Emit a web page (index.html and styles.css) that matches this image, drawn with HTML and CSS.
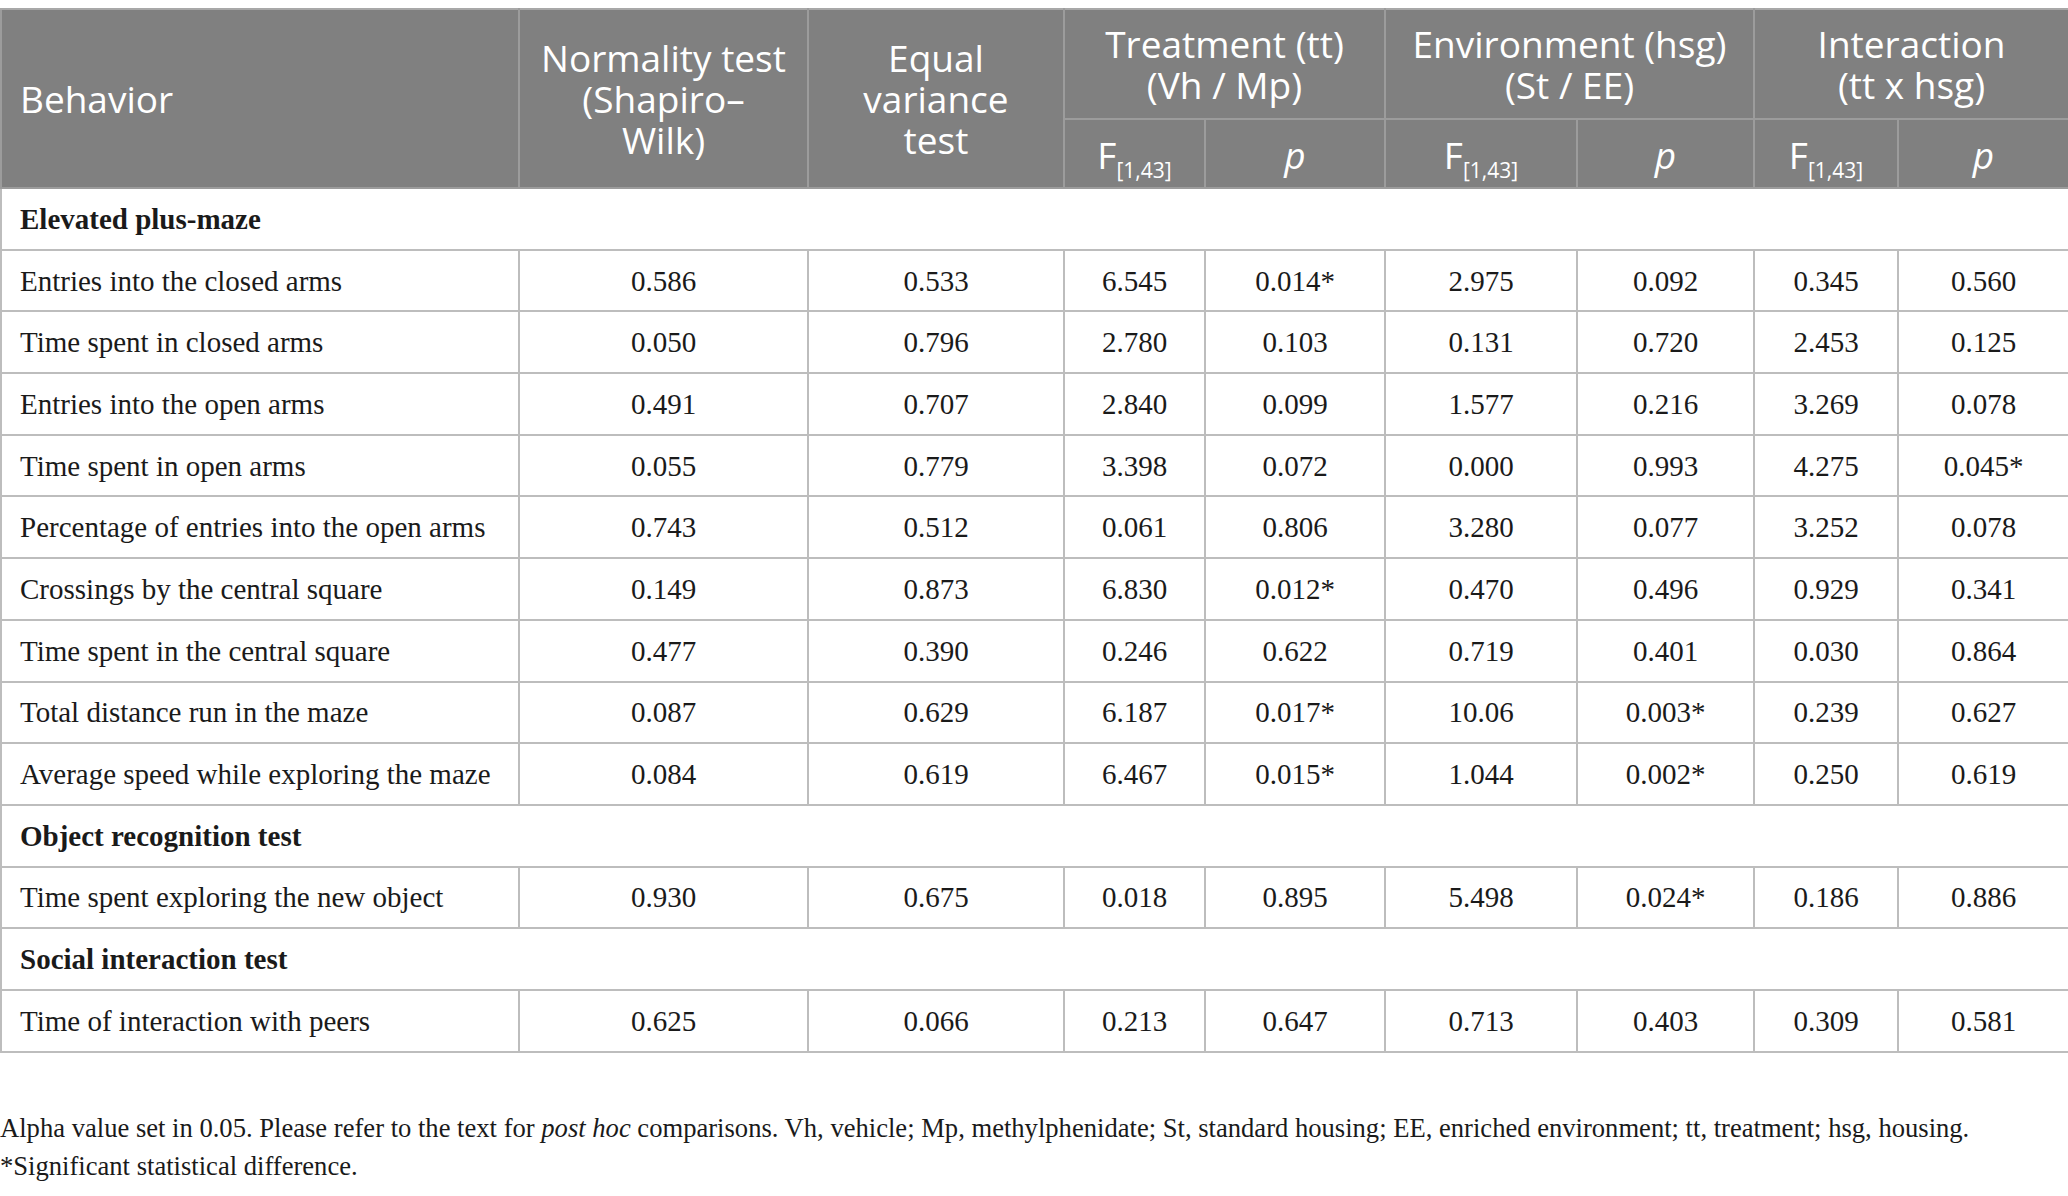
FILE: index.html
```html
<!DOCTYPE html>
<html lang="en">
<head>
<meta charset="utf-8">
<title>Table</title>
<link rel="stylesheet" href="styles.css">
</head>
<body>
<table class="stats">
  <colgroup>
    <col class="c-beh"><col class="c-norm"><col class="c-eq">
    <col class="c-f1"><col class="c-p1"><col class="c-f2"><col class="c-p2"><col class="c-f3"><col class="c-p3">
  </colgroup>
  <thead>
    <tr class="h1">
      <th rowspan="2" class="left">Behavior</th>
      <th rowspan="2">Normality test<br>(Shapiro–<br>Wilk)</th>
      <th rowspan="2">Equal<br>variance<br>test</th>
      <th colspan="2">Treatment (tt)<br>(Vh / Mp)</th>
      <th colspan="2">Environment (hsg)<br>(St / EE)</th>
      <th colspan="2">Interaction<br>(tt x hsg)</th>
    </tr>
    <tr class="h2">
      <th>F<sub>[1,43]</sub></th><th><i>p</i></th>
      <th>F<sub>[1,43]</sub></th><th><i>p</i></th>
      <th>F<sub>[1,43]</sub></th><th><i>p</i></th>
    </tr>
  </thead>
  <tbody>
    <tr class="sec"><td colspan="9">Elevated plus-maze</td></tr>
    <tr><td>Entries into the closed arms</td><td>0.586</td><td>0.533</td><td>6.545</td><td>0.014*</td><td>2.975</td><td>0.092</td><td>0.345</td><td>0.560</td></tr>
    <tr><td>Time spent in closed arms</td><td>0.050</td><td>0.796</td><td>2.780</td><td>0.103</td><td>0.131</td><td>0.720</td><td>2.453</td><td>0.125</td></tr>
    <tr><td>Entries into the open arms</td><td>0.491</td><td>0.707</td><td>2.840</td><td>0.099</td><td>1.577</td><td>0.216</td><td>3.269</td><td>0.078</td></tr>
    <tr><td>Time spent in open arms</td><td>0.055</td><td>0.779</td><td>3.398</td><td>0.072</td><td>0.000</td><td>0.993</td><td>4.275</td><td>0.045*</td></tr>
    <tr><td>Percentage of entries into the open arms</td><td>0.743</td><td>0.512</td><td>0.061</td><td>0.806</td><td>3.280</td><td>0.077</td><td>3.252</td><td>0.078</td></tr>
    <tr><td>Crossings by the central square</td><td>0.149</td><td>0.873</td><td>6.830</td><td>0.012*</td><td>0.470</td><td>0.496</td><td>0.929</td><td>0.341</td></tr>
    <tr><td>Time spent in the central square</td><td>0.477</td><td>0.390</td><td>0.246</td><td>0.622</td><td>0.719</td><td>0.401</td><td>0.030</td><td>0.864</td></tr>
    <tr><td>Total distance run in the maze</td><td>0.087</td><td>0.629</td><td>6.187</td><td>0.017*</td><td>10.06</td><td>0.003*</td><td>0.239</td><td>0.627</td></tr>
    <tr><td>Average speed while exploring the maze</td><td>0.084</td><td>0.619</td><td>6.467</td><td>0.015*</td><td>1.044</td><td>0.002*</td><td>0.250</td><td>0.619</td></tr>
    <tr class="sec"><td colspan="9">Object recognition test</td></tr>
    <tr><td>Time spent exploring the new object</td><td>0.930</td><td>0.675</td><td>0.018</td><td>0.895</td><td>5.498</td><td>0.024*</td><td>0.186</td><td>0.886</td></tr>
    <tr class="sec"><td colspan="9">Social interaction test</td></tr>
    <tr><td>Time of interaction with peers</td><td>0.625</td><td>0.066</td><td>0.213</td><td>0.647</td><td>0.713</td><td>0.403</td><td>0.309</td><td>0.581</td></tr>
  </tbody>
</table>
<div class="notes">
  <p>Alpha value set in 0.05. Please refer to the text for <i>post hoc</i> comparisons. Vh, vehicle; Mp, methylphenidate; St, standard housing; EE, enriched environment; tt, treatment; hsg, housing.</p>
  <p>*Significant statistical difference.</p>
</div>
</body>
</html>
```
FILE: styles.css
```css
html, body {
  background: #ffffff;
}
body {
  margin: 8px 0 0 0;
  font-family: "Liberation Serif", "Times New Roman", serif;
  color: #1a1a1a;
}
.stats {
  width: 2068px;
  border-collapse: collapse;
  table-layout: fixed;
}
.c-beh { width: 518px; }
.c-norm { width: 289px; }
.c-eq { width: 256px; }
.c-f1 { width: 141px; }
.c-p1 { width: 180px; }
.c-f2 { width: 192px; }
.c-p2 { width: 177px; }
.c-f3 { width: 144px; }
.c-p3 { width: 171px; }

.stats th {
  background: #808080;
  color: #ffffff;
  font-family: "Open Sans", "Noto Sans", sans-serif;
  font-weight: 400;
  font-size: 37px;
  line-height: 41px;
  text-align: center;
  vertical-align: middle;
  border: 2px solid #9c9c9c;
  padding: 0 8px;
}
.stats th.left {
  text-align: left;
  padding-left: 18px;
}
.stats thead tr.h1 { height: 110px; }
.stats thead tr.h2 { height: 69px; }
.stats thead tr.h2 th { padding-top: 2px; }
.stats sub {
  font-size: 21px;
  vertical-align: -9px;
  line-height: 0;
}
.stats thead tr:first-child th { border-top-color: #a8a8a8; }

.stats td {
  font-size: 29px;
  line-height: 32px;
  height: 59.7px;
  text-align: center;
  vertical-align: middle;
  border: 2px solid #bdbdbd;
  padding: 0 8px;
}
.stats td:first-child {
  text-align: left;
  padding-left: 18px;
}
.stats tr.sec td {
  font-weight: 700;
}
.notes {
  margin-top: 56px;
  font-size: 26.6px;
  line-height: 38px;
}
.notes p {
  margin: 0;
}
```
